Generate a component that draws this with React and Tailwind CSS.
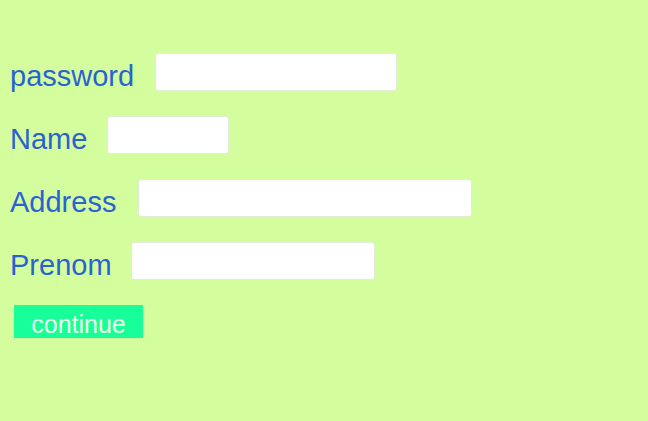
import React from 'react'

const fields = [
  { label: 'password', width: 'w-[242px]', gap: 'gap-[21px]' },
  { label: 'Name', width: 'w-[122px]', gap: 'gap-[20px]' },
  { label: 'Address', width: 'w-[334px]', gap: 'gap-[22px]' },
  { label: 'Prenom', width: 'w-[244px]', gap: 'gap-[19px]' },
]

export default function App() {
  return (
    <div className="min-h-[421px] w-full bg-[#d4fe9e] pt-[53px] pl-[10px] font-['Liberation_Sans',Arial,sans-serif]">
      <form className="flex flex-col gap-[26px]" onSubmit={(e) => e.preventDefault()}>
        {fields.map((f) => (
          <div key={f.label} className={`flex items-center ${f.gap} h-[37px]`}>
            <label className="text-[29px] leading-none text-[#2a62d1] pt-[9px]">{f.label}</label>
            <input className={`${f.width} h-[38px] bg-white border border-[#e2ecd8] rounded-[3px] outline-none`} />
          </div>
        ))}
        <div className="pl-[4px]">
          <button type="submit" className="w-[129px] h-[33px] bg-[#18ff9a] text-[#e9ffe9] text-[25px] leading-none pt-[6px]">
            continue
          </button>
        </div>
      </form>
    </div>
  )
}
